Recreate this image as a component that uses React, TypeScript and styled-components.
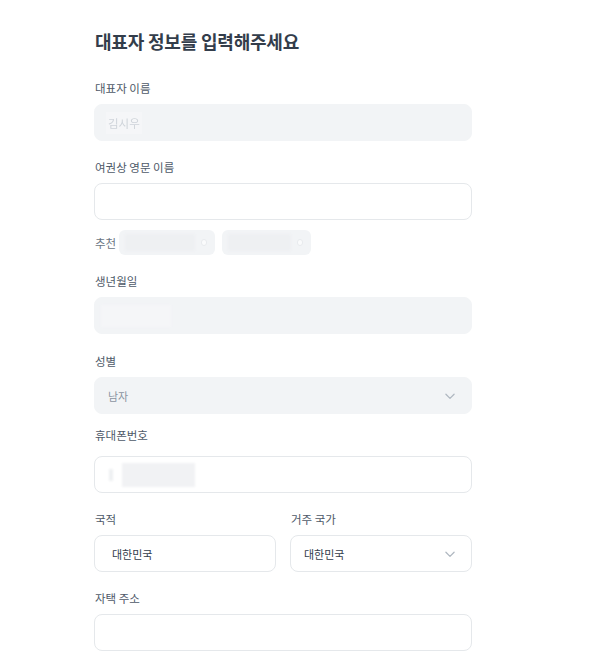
import { createGlobalStyle } from 'styled-components';
import styled from 'styled-components';

const GlobalStyle = createGlobalStyle`
  html, body {
    margin: 0;
    padding: 0;
    background: #ffffff;
  }
  body {
    font-family: 'Noto Sans CJK KR', 'Noto Sans', sans-serif;
    -webkit-font-smoothing: antialiased;
  }
`;

const Page = styled.div`
  width: 600px;
  height: 664px;
  overflow: hidden;
  box-sizing: border-box;
  padding: 29px 0 0 94px;
`;

const Form = styled.div`
  width: 378px;
  display: flex;
  flex-direction: column;
`;

const Title = styled.h1`
  margin: 0 0 27px 1px;
  font-size: 18px;
  line-height: 24px;
  font-weight: 700;
  color: #333d4b;
  letter-spacing: -0.2px;
`;

const Field = styled.div<{ $gap?: number }>`
  display: flex;
  flex-direction: column;
  margin-bottom: ${(p) => p.$gap ?? 18}px;
`;

const Label = styled.label<{ $space?: number }>`
  margin: 0 0 ${(p) => p.$space ?? 8}px 1px;
  font-size: 11.5px;
  line-height: 16px;
  color: #4e5968;
`;

const Box = styled.div<{ $filled?: boolean; $pad?: number }>`
  height: 37px;
  box-sizing: border-box;
  border-radius: 8px;
  display: flex;
  align-items: center;
  padding: 0 14px 0 ${(p) => p.$pad ?? 13}px;
  background: ${(p) => (p.$filled ? '#f2f4f6' : '#ffffff')};
  border: 1px solid ${(p) => (p.$filled ? '#f2f4f6' : '#e5e8eb')};
  font-size: 11px;
  color: #333d4b;
`;

const Value = styled.span<{ $muted?: boolean }>`
  flex: 1;
  color: ${(p) => (p.$muted ? '#8b95a1' : '#333d4b')};
`;

const Blurred = styled.span`
  font-size: 11.5px;
  color: #cfd4da;
  filter: blur(0.6px);
  background: #f5f6f8;
  padding: 3px 2px;
`;

const Smudge = styled.span<{ $w: number; $h: number; $color: string; $after?: number }>`
  display: inline-block;
  width: ${(p) => p.$w}px;
  height: ${(p) => p.$h}px;
  margin-right: ${(p) => p.$after ?? 0}px;
  background: ${(p) => p.$color};
  filter: blur(1px);
`;

const Row = styled.div`
  display: grid;
  grid-template-columns: 182px 182px;
  column-gap: 14px;
`;

const Suggest = styled.div`
  display: flex;
  align-items: center;
  gap: 7px;
  margin: -8px 0 18px;
`;

const SuggestLabel = styled.span`
  font-size: 11.5px;
  line-height: 16px;
  color: #6b7684;
  margin-left: 1px;
  margin-right: -4px;
`;

const Chip = styled.div<{ $w: number }>`
  width: ${(p) => p.$w}px;
  height: 25px;
  border-radius: 6px;
  background: #f2f4f6;
  display: flex;
  align-items: center;
  padding: 0 8px 0 6px;
  box-sizing: border-box;
  gap: 6px;
`;

const ChipText = styled.span`
  flex: 1;
  height: 17px;
  background: #eef0f2;
  filter: blur(1.2px);
`;

const ChipDot = styled.span`
  width: 4px;
  height: 5px;
  border-radius: 3px;
  border: 1px solid #e8ebee;
  background: #fafbfc;
`;

const Chevron = () => (
  <svg width="14" height="14" viewBox="0 0 24 24" fill="none">
    <path
      d="M5 9l7 7 7-7"
      stroke="#b0b8c1"
      strokeWidth="2.2"
      strokeLinecap="round"
      strokeLinejoin="round"
    />
  </svg>
);

export default function App() {
  return (
    <>
      <GlobalStyle />
      <Page>
        <Form>
          <Title>대표자 정보를 입력해주세요</Title>

          <Field>
            <Label>대표자 이름</Label>
            <Box $filled $pad={11}>
              <Blurred>김시우</Blurred>
            </Box>
          </Field>

          <Field>
            <Label>여권상 영문 이름</Label>
            <Box />
          </Field>

          <Suggest>
            <SuggestLabel>추천</SuggestLabel>
            <Chip $w={96}>
              <ChipText />
              <ChipDot />
            </Chip>
            <Chip $w={89}>
              <ChipText />
              <ChipDot />
            </Chip>
          </Suggest>

          <Field $gap={19}>
            <Label>생년월일</Label>
            <Box $filled $pad={6}>
              <Smudge $w={70} $h={22} $color="#f5f6f8" />
            </Box>
          </Field>

          <Field $gap={13}>
            <Label>성별</Label>
            <Box $filled>
              <Value $muted>남자</Value>
              <Chevron />
            </Box>
          </Field>

          <Field $gap={18}>
            <Label $space={13}>휴대폰번호</Label>
            <Box $pad={14}>
              <Smudge $w={4} $h={12} $color="#eef0f2" $after={9} />
              <Smudge $w={73} $h={24} $color="#f1f2f4" />
            </Box>
          </Field>

          <Row>
            <Field>
              <Label>국적</Label>
              <Box $pad={17}>
                <Value>대한민국</Value>
              </Box>
            </Field>
            <Field>
              <Label>거주 국가</Label>
              <Box>
                <Value>대한민국</Value>
                <Chevron />
              </Box>
            </Field>
          </Row>

          <Field>
            <Label>자택 주소</Label>
            <Box />
          </Field>
        </Form>
      </Page>
    </>
  );
}
